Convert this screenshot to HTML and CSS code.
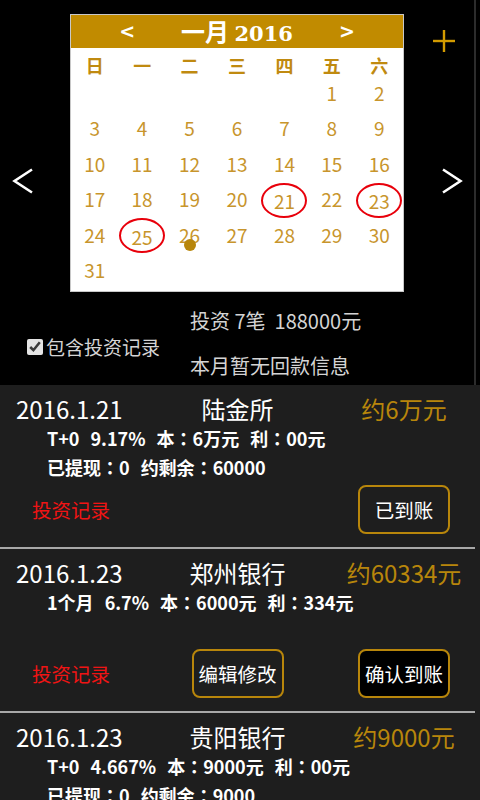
FILE: index.html
```html
<!DOCTYPE html>
<html lang="zh-CN">
<head>
    <meta charset="UTF-8">
    <title>投资日历</title>
    <link rel="stylesheet" href="styles.css">
</head>
<body>
    <div class="top">
        <div class="cal-row">
            <div class="side side-left">
                <svg class="big-arrow" width="22" height="26" viewBox="0 0 22 26">
                    <polyline points="20,1.5 2.5,13 20,24.5" fill="none" stroke="#fff" stroke-width="2.6"/>
                </svg>
            </div>

            <div class="calendar">
                <div class="cal-head">
                    <span class="cal-nav">&lt;</span>
                    <span class="cal-title">一月 <b>2016</b></span>
                    <span class="cal-nav">&gt;</span>
                </div>
                <div class="week">
                    <span>日</span><span>一</span><span>二</span><span>三</span><span>四</span><span>五</span><span>六</span>
                </div>
                <div class="days" id="days"></div>
            </div>

            <div class="side side-right">
                <svg class="plus" width="22" height="22" viewBox="0 0 22 22">
                    <line x1="11" y1="0" x2="11" y2="22" stroke="#d39b00" stroke-width="2.4"/>
                    <line x1="0" y1="11" x2="22" y2="11" stroke="#d39b00" stroke-width="2.4"/>
                </svg>
                <svg class="big-arrow" width="22" height="26" viewBox="0 0 22 26">
                    <polyline points="2,1.5 19.5,13 2,24.5" fill="none" stroke="#fff" stroke-width="2.6"/>
                </svg>
            </div>
        </div>

        <div class="summary">
            <label class="include">
                <input type="checkbox" checked>包含投资记录
            </label>
            <div class="stats">
                <div>投资 7笔&nbsp; 188000元</div>
                <div>本月暂无回款信息</div>
            </div>
        </div>
    </div>

    <div class="list">
        <div class="item">
            <div class="line-main">
                <span class="date">2016.1.21</span>
                <span class="name">陆金所</span>
                <span class="amount">约6万元</span>
            </div>
            <div class="line-sub">
                <span>T+0</span><span>9.17%</span>
                <span>本<i lang="ja">：</i>6万元</span><span>利<i lang="ja">：</i>00元</span>
            </div>
            <div class="line-sub">
                <span>已提现<i lang="ja">：</i>0</span><span>约剩余<i lang="ja">：</i>60000</span>
            </div>
            <div class="line-act">
                <span class="record">投资记录</span>
                <span></span>
                <span><button class="btn">已到账</button></span>
            </div>
        </div>

        <div class="item">
            <div class="line-main">
                <span class="date">2016.1.23</span>
                <span class="name">郑州银行</span>
                <span class="amount">约60334元</span>
            </div>
            <div class="line-sub">
                <span>1个月</span><span>6.7%</span>
                <span>本<i lang="ja">：</i>6000元</span><span>利<i lang="ja">：</i>334元</span>
            </div>
            <div class="line-sub"></div>
            <div class="line-act">
                <span class="record">投资记录</span>
                <span><button class="btn">编辑修改</button></span>
                <span><button class="btn btn-dark">确认到账</button></span>
            </div>
        </div>

        <div class="item">
            <div class="line-main">
                <span class="date">2016.1.23</span>
                <span class="name">贵阳银行</span>
                <span class="amount">约9000元</span>
            </div>
            <div class="line-sub">
                <span>T+0</span><span>4.667%</span>
                <span>本<i lang="ja">：</i>9000元</span><span>利<i lang="ja">：</i>00元</span>
            </div>
            <div class="line-sub">
                <span>已提现<i lang="ja">：</i>0</span><span>约剩余<i lang="ja">：</i>9000</span>
            </div>
            <div class="line-act">
                <span class="record">投资记录</span>
                <span></span>
                <span><button class="btn">已到账</button></span>
            </div>
        </div>
    </div>

    <script>
        // 2016年1月1日是星期五
        const firstDay = 5;
        const circled = [21, 23, 25];
        const dotted = [26];

        function renderDays() {
            const box = document.getElementById('days');
            for (let i = 0; i < firstDay; i++) {
                box.appendChild(document.createElement('span'));
            }
            for (let d = 1; d <= 31; d++) {
                const cell = document.createElement('span');
                cell.className = 'day';
                if (circled.includes(d)) cell.className += ' circled';
                if (dotted.includes(d)) cell.className += ' dotted';
                cell.textContent = d;
                box.appendChild(cell);
            }
        }

        renderDays();
    </script>
</body>
</html>
```

FILE: styles.css
```css
html, body {
    margin: 0;
    padding: 0;
    overflow: hidden;
}
body {
    font-family: "Noto Sans CJK SC", sans-serif;
    background-color: #000;
    color: #fff;
}
.top {
    width: 476px;
    height: 385px;
    border-right: 2px solid #2c2c2c;
    box-sizing: border-box;
}
.cal-row {
    display: flex;
    padding-top: 14px;
}
.side {
    display: flex;
    flex-direction: column;
}
.side-left {
    width: 70px;
}
.side-left .big-arrow {
    margin: 154px 0 0 12px;
}
.side-right {
    flex: 1;
}
.plus {
    margin: 16px 0 0 29px;
}
.side-right .big-arrow {
    margin: 116px 0 0 37px;
}
.calendar {
    width: 334px;
    height: 278px;
    box-sizing: border-box;
    background-color: #fff;
    border: 1px solid #c8c8c8;
    overflow: hidden;
}
.cal-head {
    height: 33px;
    background-color: #c18b00;
    display: flex;
    justify-content: center;
    align-items: center;
    gap: 46px;
    color: #fff;
}
.cal-nav {
    font-family: "DejaVu Sans", sans-serif;
    font-weight: bold;
    font-size: 19px;
    line-height: 33px;
}
.cal-title {
    font-weight: bold;
    font-size: 24px;
    line-height: 33px;
}
.cal-title b {
    font-family: "DejaVu Serif", serif;
    font-size: 21px;
}
.week, .days {
    display: grid;
    grid-template-columns: repeat(7, 1fr);
    text-align: center;
    color: #c08a10;
}
.week {
    height: 29px;
    padding-top: 6px;
    box-sizing: border-box;
    font-size: 18px;
    font-weight: bold;
    line-height: 22px;
}
.days {
    grid-auto-rows: 35.4px;
    margin-top: -2px;
    font-size: 19px;
    color: #c8952c;
}
.day {
    position: relative;
    line-height: 35.4px;
}
.circled {
    padding-top: 5px;
    line-height: 30.4px;
}
.circled::after {
    content: "";
    position: absolute;
    left: 50%;
    top: 50%;
    width: 42px;
    height: 31px;
    margin: -16px 0 0 -23px;
    border: 2px solid #e8000b;
    border-radius: 50%;
}
.dotted::after {
    content: "";
    position: absolute;
    left: 50%;
    top: 50%;
    width: 12px;
    height: 12px;
    margin: 5px 0 0 -6px;
    border-radius: 50%;
    background-color: #b8860b;
}
.summary {
    display: flex;
    height: 93px;
    color: #d4d4d4;
    font-size: 20px;
}
.include {
    width: 163px;
    height: 28px;
    padding: 41px 0 0 27px;
    display: flex;
    align-items: center;
    line-height: 28px;
    font-size: 19px;
}
.include input {
    width: 16px;
    height: 16px;
    margin: 0 3px 0 0;
    accent-color: #e4e4e4;
}
.stats {
    padding-top: 15px;
    line-height: 28px;
}
.stats div + div {
    margin-top: 17px;
}
.list {
    background-color: #1e1e1e;
    height: 415px;
}
.item {
    width: 475px;
    padding: 9px 0 13px;
    border-bottom: 2px solid #a8a8a8;
}
.line-main, .line-act {
    display: grid;
    grid-template-columns: 158px 159px 1fr;
    align-items: center;
}
.line-main {
    height: 30px;
    line-height: 30px;
    font-size: 24px;
}
.date {
    padding-left: 16px;
}
.name {
    text-align: center;
}
.amount {
    padding-left: 16px;
    text-align: center;
    color: #b8860b;
}
.line-sub {
    display: flex;
    gap: 11px;
    height: 29px;
    line-height: 29px;
    padding-left: 47px;
    font-size: 18px;
    font-weight: bold;
}
.line-sub i {
    font-family: "Noto Sans CJK JP", sans-serif;
    font-style: normal;
}
.line-act {
    margin-top: 3px;
    height: 49px;
}
.line-act span {
    text-align: center;
}
.line-act span:last-child {
    padding-left: 16px;
}
.line-act .record {
    text-align: left;
    padding-left: 32px;
    color: #f01414;
    font-size: 19.5px;
}
.btn {
    width: 92px;
    height: 49px;
    border: 2px solid #b8860b;
    border-radius: 8px;
    background-color: transparent;
    color: #fff;
    font-family: "Noto Sans CJK SC", sans-serif;
    font-size: 19.5px;
    padding: 0;
    cursor: pointer;
}
.btn-dark {
    background-color: #000;
}
```
